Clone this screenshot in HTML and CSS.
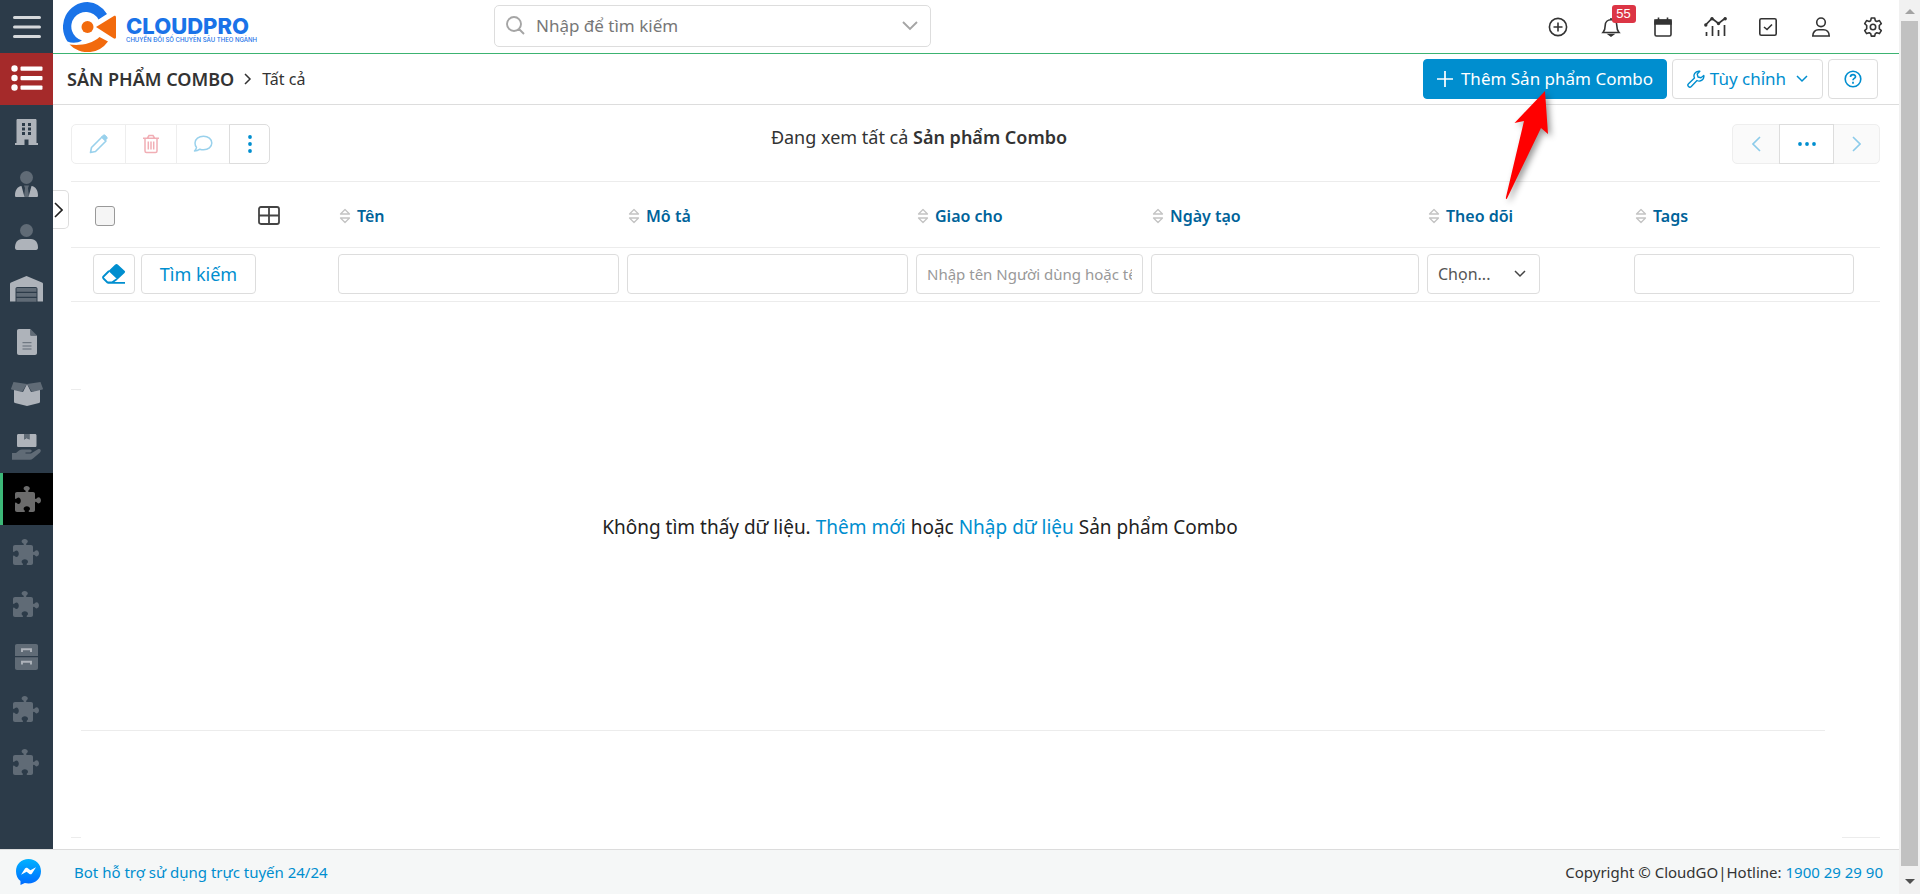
FILE: index.html
```html
<!DOCTYPE html>
<html lang="vi">
<head>
<meta charset="utf-8">
<title>Sản phẩm Combo</title>
<link rel="stylesheet" href="styles.css">
</head>
<body>
<svg class="defs" aria-hidden="true">
  <symbol id="puzzle" viewBox="0 0 26 26"><path d="M2 6h8c.8 0 1-.6.6-1.300C9.800 4 8.600 3.500 8.600 2.400 8.600 1 10 0 11.700 0s3.100 1 3.100 2.400c0 1.100-1.200 1.600-1.500 2.300-.4.700-.1 1.300.7 1.300h4c1.200 0 2 .8 2 2v4c0 .8.600 1.100 1.300.7.700-.4 1.200-1.500 2.300-1.500 1.400 0 2.400 1.400 2.400 3.100s-1 3.100-2.400 3.100c-1.100 0-1.600-1.200-2.300-1.500-.7-.4-1.300-.1-1.300.7V24c0 1.200-.8 2-2 2h-3.500c-.8 0-1.100-.6-.7-1.300.4-.6 1.200-1 1.200-2 0-1.400-1.500-2.400-3.200-2.400S8.600 21.300 8.600 22.700c0 1 .8 1.400 1.200 2 .4.700.1 1.300-.7 1.300H2c-1.200 0-2-.8-2-2v-6.500c0-.8.600-1.100 1.300-.7.600.4 1.100 1.200 2.100 1.200 1.400 0 2.400-1.500 2.400-3.200s-1-3.200-2.400-3.200c-1 0-1.500.8-2.100 1.200C.6 13.200 0 12.900 0 12.100V8c0-1.200.8-2 2-2z"/></symbol>
  <symbol id="sort" viewBox="0 0 12 16"><path d="M1.500 6h9L6 1.500zM1.500 10h9L6 14.500z" fill="none" stroke="#c4c4c4" stroke-width="1.300" stroke-linejoin="round"/></symbol>
</svg>
<div class="app">
  <nav class="sidebar" aria-label="Menu chính">
    <button class="burger" aria-label="Menu"><svg width="28" height="24" viewBox="0 0 28 24"><path d="M1.500 2.500h25M1.500 12h25M1.500 21.500h25" stroke="#d5d8db" stroke-width="3" stroke-linecap="round"/></svg></button>
    <a href="#" class="modules" aria-label="Danh sách"><svg width="32" height="26" viewBox="0 0 32 26"><g fill="#fff"><circle cx="3.500" cy="3.500" r="3.200"/><circle cx="3.500" cy="13" r="3.200"/><circle cx="3.500" cy="22.500" r="3.200"/><rect x="9.500" y="1.500" width="22" height="4.200" rx="1"/><rect x="9.500" y="11" width="22" height="4.200" rx="1"/><rect x="9.500" y="20.500" width="22" height="4.200" rx="1"/></g></svg></a>
    <ul class="menu">
      <li><a href="#" aria-label="Công ty"><svg width="24" height="26" viewBox="0 0 24 26"><path class="hi" fill-rule="evenodd" d="M2 0h19v.5h.5V24H23v2H13.500v-5.500h-4V26H0v-2h1.500V.5H2zM7 4v3h3V4zm6 0v3h3V4zM7 8.500v3h3v-3zm6 0v3h3v-3zM7 13v3h3v-3zm6 0v3h3v-3z"/></svg></a></li>
      <li><a href="#" aria-label="Khách hàng"><svg width="24" height="26" viewBox="0 0 24 26"><circle class="lo" cx="11.500" cy="6.500" r="6.500"/><path class="lo" d="M9 14.500h5l-1 2.500 1 9H9l1-9z"/><path class="hi" d="M6.500 15 9.500 26H1.500C.5 26 0 25.500 0 24.500 0 19 2.500 15.500 6.500 15zM16.500 15l-3 11h8c1 0 1.500-.5 1.500-1.500 0-5.500-2.500-9-6.500-9.500z"/></svg></a></li>
      <li><a href="#" aria-label="Liên hệ"><svg width="24" height="26" viewBox="0 0 24 26"><circle class="lo" cx="11.500" cy="6.500" r="6.500"/><path class="hi" d="M7 15h9c4.500 0 7 4 7 8.500 0 1.500-.7 2.500-2 2.500H2c-1.300 0-2-1-2-2.500C0 19 2.500 15 7 15z"/></svg></a></li>
      <li><a href="#" aria-label="Kho"><svg width="34" height="26" viewBox="0 0 34 26"><path class="hi" d="M0 8c0-.8.4-1.200 1-1.500L16.500 0 32 6.500c.6.300 1 .7 1 1.500v17.500H27.500V13c0-1.300-.7-2-2-2h-18c-1.300 0-2 .7-2 2v12.500H0z"/><path class="lo" d="M6.500 12h20v3.700h-20zM6.500 17h20v3.700h-20zM6.500 22h20v3.700h-20z"/></svg></a></li>
      <li><a href="#" aria-label="Tài liệu"><svg width="20" height="26" viewBox="0 0 20 26"><path class="hi" d="M2 0h11.500v6.500H20V24c0 1.300-.7 2-2 2H2c-1.300 0-2-.7-2-2V2C0 .7.700 0 2 0z"/><path class="lo" d="M13.500 0 20 6.500h-6.500z"/><path class="line" d="M5.500 13.700h9M5.500 17h9M5.500 20h9"/></svg></a></li>
      <li><a href="#" aria-label="Sản phẩm"><svg width="32" height="24" viewBox="0 0 32 24"><path class="hi" d="M3 7l9 3 4-8 4 8 9-3v12.500c0 .8-.3 1.200-1 1.400L16 24 4 20.900c-.7-.2-1-.6-1-1.400z"/><path class="lo" d="M2.500 0 16 2l-5 8L.5 7.500C0 7.300-.1 7 .1 6.500zM29.500 0 16 2l5 8 10.500-2.500c.5-.2.600-.5.400-1z"/></svg></a></li>
      <li><a href="#" aria-label="Giao hàng"><svg width="30" height="26" viewBox="0 0 30 26"><path class="hi" d="M6.500 0H12v5.500L14.700 4l2.700 1.500V0H23c1 0 1.500.6 1.500 1.500v10c0 1-.5 1.500-1.500 1.500H6.500C5.500 13 5 12.500 5 11.500v-10C5 .6 5.500 0 6.500 0z"/><path class="lo" d="M12 0h5.400v5.500L14.700 4 12 5.500zM0 19h4l3-2.500c1-.7 2-1 3-1h8c2.500 0 2 3 0 3h-4.500v1H19l6.500-4c2.500-1.300 4.500 1 2.500 3l-7 6c-1 .9-2 1.300-3 1.300H0z"/></svg></a></li>
      <li class="active"><a href="#" aria-label="Sản phẩm Combo"><svg width="26" height="26"><use href="#puzzle"/></svg></a></li>
      <li class="module"><a href="#" aria-label="Mô-đun 1"><svg width="26" height="26"><use href="#puzzle"/></svg></a></li>
      <li class="module"><a href="#" aria-label="Mô-đun 2"><svg width="26" height="26"><use href="#puzzle"/></svg></a></li>
      <li><a href="#" aria-label="Lưu trữ"><svg width="24" height="26" viewBox="0 0 24 26"><path class="lo" d="M2 0h19c1.300 0 2 .7 2 2v10H0V2C0 .7.700 0 2 0zM0 13.300h23V24c0 1.300-.7 2-2 2H2c-1.300 0-2-.7-2-2z"/><path d="M7 8V5.300h9V8M7 20.500v-2.700h9v2.700" fill="none" stroke="#aeb3ba" stroke-width="1.900"/></svg></a></li>
      <li class="module"><a href="#" aria-label="Mô-đun 3"><svg width="26" height="26"><use href="#puzzle"/></svg></a></li>
      <li class="module"><a href="#" aria-label="Mô-đun 4"><svg width="26" height="26"><use href="#puzzle"/></svg></a></li>
    </ul>
  </nav>

  <main class="page">
    <header class="topbar">
      <a href="#" class="logo">
        <svg width="53" height="50" viewBox="0 0 53 50"><path fill="#1a73e8" d="M44 12A25 25 0 0 0 24.500 0 24.500 25 0 0 0 4.500 39.500C9 41.500 15 41 19 38.500A14.500 14.500 0 1 1 35.500 17.500z"/><path fill="#f26a0d" d="M6.500 42.500C17 44 29 42 36.500 35l8.500 4.500A25 25 0 0 1 6.500 42.500z"/><circle cx="24.500" cy="25" r="6" fill="#f26a0d"/><path fill="#f26a0d" d="M33 25 50.500 14.200c1.500-.9 2.500-.3 2.500 1.300v19.500c0 1.600-1 2.200-2.500 1.300z"/></svg>
        <span class="brand"><strong>CLOUDPRO</strong><small>CHUYỂN ĐỔI SỐ CHUYÊN SÂU THEO NGÀNH</small></span>
      </a>
      <div class="search">
        <svg width="20" height="20" viewBox="0 0 20 20"><path d="M12.500 12.500 18 18M15 8A7 7 0 1 1 1 8a7 7 0 0 1 14 0z" fill="none" stroke="#a5a5a5" stroke-width="1.900"/></svg>
        <input type="text" aria-label="Tìm kiếm toàn hệ thống" placeholder="Nhập để tìm kiếm">
        <button aria-label="Mở rộng"><svg width="16" height="10" viewBox="0 0 16 10"><path d="m1 1 7 7 7-7" fill="none" stroke="#a5a5a5" stroke-width="1.900"/></svg></button>
      </div>
      <div class="tools">
        <button aria-label="Thêm nhanh"><svg viewBox="0 0 20 20"><circle cx="10" cy="10" r="8.600"/><path d="M10 5.500v9M5.500 10h9"/></svg></button>
        <button aria-label="Thông báo"><svg viewBox="0 0 20 20"><path d="M2 15.500h16c-1.800-2-2.200-3.500-2.200-7 0-3.500-2.500-5.700-5.800-5.700S4.200 5 4.200 8.500c0 3.500-.4 5-2.200 7z"/><path d="M10 2.500V1" /><path d="M8 17.500h4L10 19z" fill="#333"/></svg><span class="badge">55</span></button>
        <button aria-label="Lịch"><svg viewBox="0 0 20 20"><rect x="2" y="3.200" width="16" height="15.800" rx="1.500"/><path d="M2 3h16v4H2zM5.500 3V.5M14.500 3V.5" fill="#333"/></svg></button>
        <button aria-label="Báo cáo"><svg class="wide" viewBox="0 0 23 20"><path d="M1.500 8 8 1.500l6.500 5L21.500 1M2.500 19v-4M8.500 19V9M14.500 19v-6M20.500 19V8" stroke-width="1.700"/><g fill="#333" stroke="none"><circle cx="1.800" cy="8" r="1.700"/><circle cx="8" cy="1.800" r="1.700"/><circle cx="14.500" cy="6.500" r="1.700"/><circle cx="21.200" cy="1.800" r="1.700"/></g></svg></button>
        <button aria-label="Công việc"><svg viewBox="0 0 20 20"><rect x="1.800" y="1.800" width="16.400" height="16.400" rx="1.500"/><path d="m6 10 3 2.500L14 7.500"/></svg></button>
        <button aria-label="Tài khoản"><svg viewBox="0 0 20 20"><circle cx="10" cy="5.300" r="4.300"/><path d="M1.800 19c0-4 2.500-6.300 5.700-6.300h5c3.200 0 5.700 2.300 5.700 6.300z"/></svg></button>
        <button aria-label="Cài đặt"><svg viewBox="0 0 20 20"><circle cx="10" cy="10" r="2.700"/><path d="M8.300 1h3.400l.6 2.700 1.500.8 2.600-.9 1.900 3-2 1.900v3.200l2 1.900-1.900 3-2.600-.9-1.500.9-.6 2.500H8.300l-.6-2.500-1.500-.9-2.600.9-1.900-3 2-1.900V8.500l-2-1.900 1.900-3 2.600.9 1.500-.8z" stroke-linejoin="round"/></svg></button>
      </div>
    </header>

    <div class="titlebar">
      <h1>SẢN PHẨM COMBO</h1>
      <svg width="8" height="12" viewBox="0 0 8 12"><path d="m1 1 5 5-5 5" fill="none" stroke="#333" stroke-width="1.500"/></svg>
      <a href="#" class="crumb">Tất cả</a>
      <div class="actions">
        <button class="primary"><svg width="16" height="16" viewBox="0 0 16 16"><path d="M8 0v16M0 8h16" stroke="#fff" stroke-width="1.700"/></svg>Thêm Sản phẩm Combo</button>
        <button class="custom"><svg width="18" height="18" viewBox="0 0 18 18"><path d="M11.800 1.200A4.700 4.700 0 0 0 7.500 8L1.500 13.700a1.900 1.900 0 0 0 2.800 2.800L10 10.500a4.700 4.700 0 0 0 6.800-5l-2.800 2.300-3-.8-.8-3L12.800 1.200z" fill="none" stroke="#008ecf" stroke-width="1.400" stroke-linejoin="round"/></svg>Tùy chỉnh<svg class="caret" width="12" height="8" viewBox="0 0 12 8"><path d="m1 1 5 5 5-5" fill="none" stroke="#008ecf" stroke-width="1.500"/></svg></button>
        <button class="help" aria-label="Trợ giúp"><svg width="18" height="18" viewBox="0 0 18 18" fill="none" stroke="#008ecf"><circle cx="9" cy="9" r="7.800" stroke-width="1.600"/><path d="M6.500 7c0-3 5-3 5-.3 0 1.700-2.500 1.700-2.500 3.500M9 11.700v2" stroke-width="1.700"/></svg></button>
      </div>
      <svg class="pointer" viewBox="0 0 60 120"><path d="M45 3 48 46 41 40 7 110.500Q5.500 112 6 109L24 33 14.500 35z" fill="#f00"/></svg>
    </div>

    <section class="content">
      <button class="expander" aria-label="Mở thanh bên"><svg width="9" height="16" viewBox="0 0 9 16"><path d="m1 1 7 7-7 7" fill="none" stroke="#222" stroke-width="1.600"/></svg></button>
      <div class="toolbar">
        <div class="group bulk">
          <button disabled class="edit" aria-label="Sửa"><svg width="20" height="20" viewBox="0 0 20 20"><path d="M2.500 13.500 13 3l4 4L6.500 17.500 1.500 18.500z" fill="none" stroke="#99d1ec" stroke-width="1.600" stroke-linejoin="round"/><path d="m12.500 3 2-2c1-1 4.500 2.500 3.500 3.500l-2 2z" fill="#99d1ec" stroke="#99d1ec"/></svg></button>
          <button disabled class="delete" aria-label="Xóa"><svg width="18" height="20" viewBox="0 0 18 20"><path d="M1 4.200h16M5.500 4 7 1.500h4L12.500 4M3 4.500V17c0 1 .5 1.500 1.500 1.500h9c1 0 1.500-.5 1.500-1.500V4.500M6.300 7.500v8M9 7.500v8M11.700 7.500v8" fill="none" stroke="#f1aeb5" stroke-width="1.500"/></svg></button>
          <button disabled class="comment" aria-label="Bình luận"><svg width="20" height="18" viewBox="0 0 20 18"><path d="M10.500 1.200c4.700 0 8.300 2.900 8.300 6.800s-3.600 6.800-8.300 6.800c-1.300 0-2.500-.2-3.600-.6-1.400 1-3.200 1.800-5.400 1.800 1.200-1.200 1.800-2.500 2-3.600C2.500 11.200 2 9.700 2 8c0-3.900 3.800-6.800 8.500-6.800z" fill="none" stroke="#99d1ec" stroke-width="1.500" stroke-linejoin="round"/></svg></button>
          <button class="more" aria-label="Thêm thao tác"><svg width="4" height="18" viewBox="0 0 4 18" fill="#008ecf"><circle cx="2" cy="2" r="1.900"/><circle cx="2" cy="9" r="1.900"/><circle cx="2" cy="16" r="1.900"/></svg></button>
        </div>
        <p>Đang xem tất cả <b>Sản phẩm Combo</b></p>
        <div class="group pager">
          <button disabled aria-label="Trang trước"><svg width="9" height="16" viewBox="0 0 9 16"><path d="M8 1 1 8l7 7" fill="none" stroke="#8ccbea" stroke-width="1.600"/></svg></button>
          <button class="dots" aria-label="Chọn trang"><svg width="18" height="4" viewBox="0 0 18 4" fill="#008ecf"><circle cx="2" cy="2" r="1.900"/><circle cx="9" cy="2" r="1.900"/><circle cx="16" cy="2" r="1.900"/></svg></button>
          <button disabled aria-label="Trang sau"><svg width="9" height="16" viewBox="0 0 9 16"><path d="m1 1 7 7-7 7" fill="none" stroke="#8ccbea" stroke-width="1.600"/></svg></button>
        </div>
      </div>

      <table>
        <colgroup><col class="c-tools"><col class="c-text"><col class="c-text"><col class="c-owner"><col class="c-date"><col class="c-follow"><col class="c-tags"></colgroup>
        <thead>
          <tr>
            <th><div class="select"><input type="checkbox" aria-label="Chọn tất cả"><button aria-label="Cột hiển thị"><svg width="22" height="19" viewBox="0 0 22 19"><path d="M3 1h16c1.300 0 2 .7 2 2v13c0 1.300-.7 2-2 2H3c-1.300 0-2-.7-2-2V3c0-1.300.7-2 2-2zM11 1v17M1 9.500h20" fill="none" stroke="#444" stroke-width="1.800"/></svg></button></div></th>
            <th><a href="#"><svg width="12" height="16"><use href="#sort"/></svg>Tên</a></th>
            <th><a href="#"><svg width="12" height="16"><use href="#sort"/></svg>Mô tả</a></th>
            <th><a href="#"><svg width="12" height="16"><use href="#sort"/></svg>Giao cho</a></th>
            <th><a href="#"><svg width="12" height="16"><use href="#sort"/></svg>Ngày tạo</a></th>
            <th><a href="#"><svg width="12" height="16"><use href="#sort"/></svg>Theo dõi</a></th>
            <th><a href="#"><svg width="12" height="16"><use href="#sort"/></svg>Tags</a></th>
          </tr>
        </thead>
        <tbody>
          <tr>
            <td><div class="filters"><button class="erase" aria-label="Xóa bộ lọc"><svg width="24" height="20" viewBox="0 0 24 20"><path d="M13 .8 6.500 7l9 8.500L22.500 9c.8-.8.8-1.500 0-2.300L16 .8c-1-1-2-1-3 0z" fill="#008ecf"/><path d="M7 7 1.500 12.500c-.7.700-.7 1.400 0 2l4 4H10l5-3.500M6 18.800h17" fill="none" stroke="#008ecf" stroke-width="1.800"/></svg></button><button class="find">Tìm kiếm</button></div></td>
            <td><input type="text" aria-label="Tên"></td>
            <td><input type="text" aria-label="Mô tả"></td>
            <td><input type="text" aria-label="Giao cho" placeholder="Nhập tên Người dùng hoặc tên nhóm"></td>
            <td><input type="text" aria-label="Ngày tạo"></td>
            <td><span class="follow"><select aria-label="Theo dõi"><option>Chọn...</option></select><svg width="12" height="8" viewBox="0 0 12 8"><path d="m1 1 5 5 5-5" fill="none" stroke="#444" stroke-width="1.500"/></svg></span></td>
            <td><input type="text" class="tags" aria-label="Tags"></td>
          </tr>
        </tbody>
      </table>

      <div class="empty">
        <hr class="stub">
        <p>Không tìm thấy dữ liệu. <a href="#">Thêm mới</a> hoặc <a href="#">Nhập dữ liệu</a> Sản phẩm Combo</p>
        <hr class="rule">
        <div class="ends"><hr class="stub"><hr class="stub long"></div>
      </div>
    </section>
  </main>

  <footer class="footer">
    <a href="#" class="messenger" aria-label="Messenger"><svg width="26" height="26" viewBox="0 0 26 26"><defs><linearGradient id="chat" x1="0" y1="0" x2="0" y2="1"><stop offset="0" stop-color="#00b2ff"/><stop offset="1" stop-color="#006aff"/></linearGradient></defs><path d="M12.500 0C19.700 0 25 5.200 25 12.200s-5.300 12.300-12.500 12.300c-1.300 0-2.500-.2-3.700-.5L4.500 26v-4C1.700 19.800 0 16.400 0 12.200 0 5.200 5.300 0 12.500 0z" fill="url(#chat)"/><path d="m5 15.800 4-6.200c.6-.9 1.700-1.100 2.500-.5l2.900 2.200 5.600-3-4 6.200c-.6.900-1.700 1.100-2.500.5l-2.900-2.200z" fill="#fff"/></svg></a>
    <a href="#">Bot hỗ trợ sử dụng trực tuyến 24/24</a>
    <span class="copyright">Copyright © CloudGO|Hotline: <a href="#">1900 29 29 90</a></span>
  </footer>

  <div class="scrollbar" aria-hidden="true"><i class="up"></i><i class="thumb"></i><i class="down"></i></div>
</div>
</body>
</html>
```
FILE: styles.css
```css
* { box-sizing: border-box; }
body { margin: 0; background: #fff; color: #333; font: 16px/24px "Noto Sans", "Open Sans", sans-serif; }
a { color: #008ecf; text-decoration: none; }
button { display: flex; align-items: center; justify-content: center; margin: 0; padding: 0; border: 0; background: none; font: inherit; color: inherit; }
input, select { font: inherit; color: #555; }
hr { margin: 0; border: 0; height: 1px; background: #ececec; }
svg { display: block; flex: none; }
.defs { position: absolute; width: 0; height: 0; }

.app { display: grid; grid-template: 1fr auto / 53px minmax(0, 1fr) 21px; min-height: 100vh; }
.page { display: flex; flex-direction: column; }

.sidebar { background: #2c3b49; }
.burger, .modules { display: flex; align-items: center; justify-content: center; width: 100%; height: 53px; }
.modules { height: 52px; padding-bottom: 2px; background: #a52a2a; }
.menu { list-style: none; margin: 0; padding: 0; }
.menu li { height: 52px; }
.menu li:nth-child(odd) { height: 53px; }
.menu a { display: flex; align-items: center; justify-content: center; height: 100%; fill: #606b76; }
.menu .active { background: #000; border-left: 3px solid #3cb878; }
.menu .active a { fill: #6b6b6b; }
.menu .module a { padding-right: 2px; }
.hi { fill: #aeb3ba; }
.lo { fill: #606b76; }
.line { stroke: #606b76; stroke-width: 1; }

.topbar { display: flex; align-items: center; height: 54px; padding: 0 14px 0 10px; border-bottom: 1px solid #3cb371; }
.logo { display: flex; align-items: center; gap: 10px; width: 431px; color: #1a73e8; }
.brand { display: flex; flex-direction: column; padding-top: 6px; font-family: Inter, sans-serif; }
.brand strong { font-size: 22px; line-height: 20px; font-weight: 800; }
.brand small { font-size: 6px; line-height: 8px; font-weight: 500; }
.search { display: flex; align-items: center; gap: 10px; width: 437px; height: 42px; margin-bottom: 1px; padding: 0 12px 0 11px; border: 1px solid #ddd; border-radius: 5px; }
.search input { flex: 1; min-width: 0; padding: 0; border: 0; outline: 0; background: none; font-size: 17px; }
.search input::placeholder { color: #777; opacity: 1; }
.tools { display: flex; justify-content: space-between; width: 339px; margin-left: auto; }
.tools button { position: relative; width: 24px; height: 24px; }
.tools svg { width: 20px; height: 20px; fill: none; stroke: #333; stroke-width: 1.6; }
.tools .wide { width: 23px; }
.badge { position: absolute; left: 13px; top: -10px; width: 24px; border-radius: 3px; background: #dc3545; color: #fff; font: 13px/18px "Liberation Sans", sans-serif; text-align: center; }

.titlebar { position: relative; display: flex; align-items: center; gap: 10px; height: 51px; padding: 0 21px 0 14px; border-bottom: 1px solid #ddd; }
h1 { margin: 0; font-size: 18px; font-weight: 600; }
.crumb { color: #333; font-size: 16px; }
.actions { display: flex; gap: 5px; margin-left: auto; font-size: 17px; }
.actions button { height: 40px; border: 1px solid #ddd; border-radius: 4px; color: #008ecf; white-space: nowrap; }
.actions .primary { width: 244px; gap: 8px; border-color: #008ecf; background: #008ecf; color: #fff; }
.actions .custom { width: 151px; gap: 5px; }
.actions .help { width: 50px; }
.caret { margin-left: 5px; }
.pointer { position: absolute; z-index: 2; right: 339px; top: 34px; width: 60px; height: 120px; filter: drop-shadow(3px 3px 3px rgba(0, 0, 0, .4)); }

.content { position: relative; flex: 1; display: flex; flex-direction: column; padding: 19px 19px 11px 18px; }
.expander { position: absolute; left: 0; top: 85px; width: 16px; height: 39px; padding-right: 4px; border: 1px solid #ddd; border-left: 0; border-radius: 0 5px 5px 0; background: #fff; }
.toolbar { display: flex; align-items: flex-start; height: 57px; }
.toolbar p { flex: 1; margin: 0; padding-right: 164px; font-size: 18px; line-height: 26px; text-align: center; }
.toolbar b, th { font-weight: 600; }
.group { display: flex; }
.group button { height: 40px; border: 1px solid #ddd; }
.group button:disabled { border-color: #eee; }
.group button + button { margin-left: -1px; }
.group button:first-child { border-radius: 5px 0 0 5px; }
.group button:last-child { border-radius: 0 5px 5px 0; }
.edit { width: 55px; }
.delete { width: 52px; }
.comment { width: 54px; }
.more { width: 41px; }
.pager button { width: 48px; }
.pager button:last-child { width: 47px; }
.pager button:disabled { background: #fafafa; }
.pager .dots { width: 55px; position: relative; }

table { width: 100%; table-layout: fixed; border-collapse: collapse; }
.c-tools { width: 263px; }
.c-text { width: 289px; }
.c-owner { width: 235px; }
.c-date { width: 276px; }
.c-follow { width: 207px; }
.c-tags { width: 250px; }
th, td { padding: 0 4px; text-align: left; border-top: 1px solid #ececec; }
th { height: 66px; padding-top: 2px; }
td { height: 54px; padding-top: 6px; vertical-align: top; border-bottom: 1px solid #ececec; }
th a { display: flex; align-items: center; gap: 6px; padding-left: 1px; color: #00639a; }
.select { display: flex; align-items: center; justify-content: space-between; padding: 0 50px 0 20px; }
.select input { appearance: none; width: 20px; height: 20px; margin: 0; border: 1px solid #999; border-radius: 3px; background: #f5f5f5; }
.filters { display: flex; gap: 6px; padding-left: 18px; font-size: 18px; }
.filters button { height: 40px; border: 1px solid #ddd; border-radius: 4px; color: #008ecf; }
.erase { width: 42px; }
.find { width: 115px; }
td input, td select { display: block; width: 100%; height: 40px; padding: 0 10px; border: 1px solid #ddd; border-radius: 4px; background: #fff; font-size: 15px; }
td input::placeholder { color: #999; opacity: 1; }
td .tags { width: 220px; }
.follow { display: flex; align-items: center; width: 113px; }
.follow select { appearance: none; font-size: 16px; }
.follow svg { margin-left: -26px; pointer-events: none; }

.empty { flex: 1; display: flex; flex-direction: column; padding-top: 87px; }
.empty p { margin: 0; padding: 124px 111px 190px 0; text-align: center; font-size: 19px; line-height: 26px; color: #222; }
.stub { width: 10px; }
.long { width: 38px; }
.rule { margin: 0 55px 0 10px; }
.ends { display: flex; justify-content: space-between; margin-top: auto; }

.footer { grid-column: 1 / 3; display: flex; align-items: center; height: 45px; padding-right: 16px; border-top: 1px solid #dcdcdc; background: #f5f7f7; font-size: 15px; }
.messenger { width: 74px; padding-left: 16px; }
.copyright { margin-left: auto; }
.scrollbar { grid-area: 1 / 3 / 3 / 4; display: flex; flex-direction: column; align-items: center; padding: 9px 2px 10px; background: #f1f1f1; }
.up, .down { border: 5px solid transparent; border-top: 0; border-bottom-color: #a3a3a3; }
.down { border: 5px solid transparent; border-bottom: 0; border-top-color: #505050; }
.thumb { flex: 1; width: 17px; margin: 7px 0 13px; background: #c1c1c1; }
```
